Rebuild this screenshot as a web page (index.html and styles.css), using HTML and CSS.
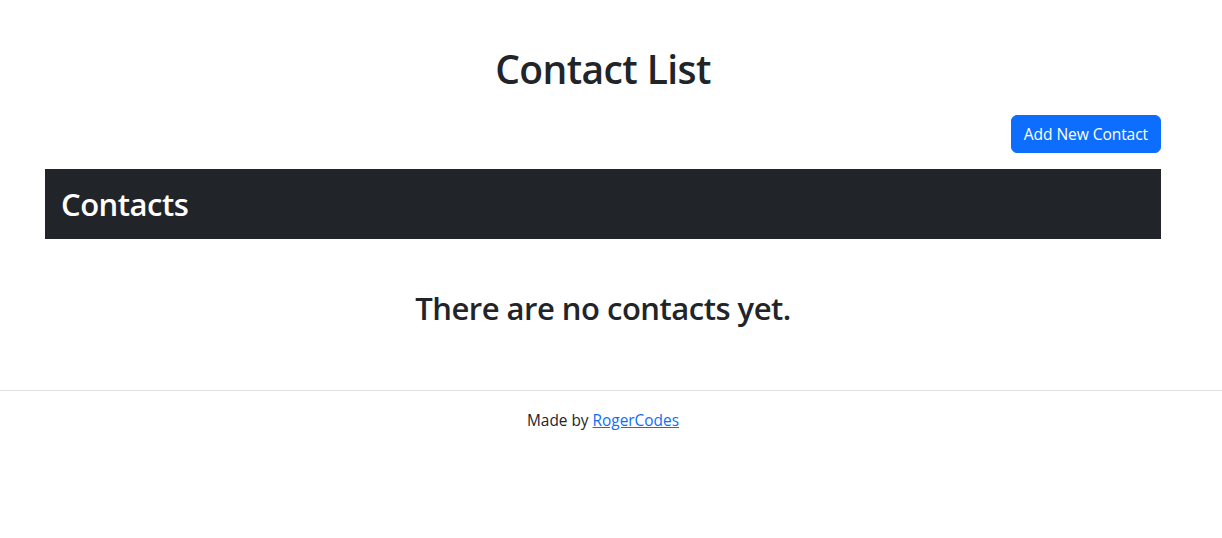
FILE: index.html
```html
<!DOCTYPE html>
<html lang="en">
<head>
<meta charset="utf-8">
<title>Contact List</title>
<link rel="stylesheet" href="styles.css">
</head>
<body>
<main class="container">
  <h1 class="title">Contact List</h1>
  <div class="actions">
    <button class="btn-primary" type="button">Add New Contact</button>
  </div>
  <div class="bar">
    <h2 class="bar-title">Contacts</h2>
  </div>
  <h2 class="empty">There are no contacts yet.</h2>
</main>
<footer class="footer">
  <p>Made by <a href="#">RogerCodes</a></p>
</footer>
</body>
</html>
```

FILE: styles.css
```css
* { box-sizing: border-box; }
html, body { margin: 0; padding: 0; background: #fff; }
body {
  font-family: "Segoe UI", "Open Sans", "Noto Sans", sans-serif;
  color: #212529;
  font-size: 16px;
  line-height: 1.5;
}
.container {
  width: 1116px;
  margin: 0 0 0 45px;
  padding-top: 45px;
}
.title {
  margin: 0 0 22px;
  font-size: 39px;
  font-weight: 600;
  letter-spacing: -0.6px;
  line-height: 48px;
  text-align: center;
}
.actions {
  display: flex;
  justify-content: flex-end;
  margin-bottom: 16px;
}
.btn-primary {
  font-family: inherit;
  font-size: 15.6px;
  letter-spacing: -0.1px;
  line-height: 24px;
  padding: 6px 12px;
  color: #fff;
  background: #0d6efd;
  border: 1px solid #0d6efd;
  border-radius: 6px;
  cursor: pointer;
}
.bar {
  background: #212529;
  padding: 16px;
}
.bar-title {
  margin: 0;
  color: #fff;
  font-size: 31px;
  font-weight: 600;
  letter-spacing: -0.5px;
  line-height: 38px;
}
.empty {
  margin: 50px 0 0;
  font-size: 31px;
  font-weight: 600;
  letter-spacing: -0.5px;
  line-height: 38px;
  text-align: center;
}
.footer {
  margin-top: 63px;
  border-top: 1px solid #dee2e6;
  padding-top: 19px;
}
.footer p {
  width: 1116px;
  margin: 0 0 0 45px;
  text-align: center;
  font-size: 15.4px;
  line-height: 22px;
}
.footer a { color: #0d6efd; }
```
